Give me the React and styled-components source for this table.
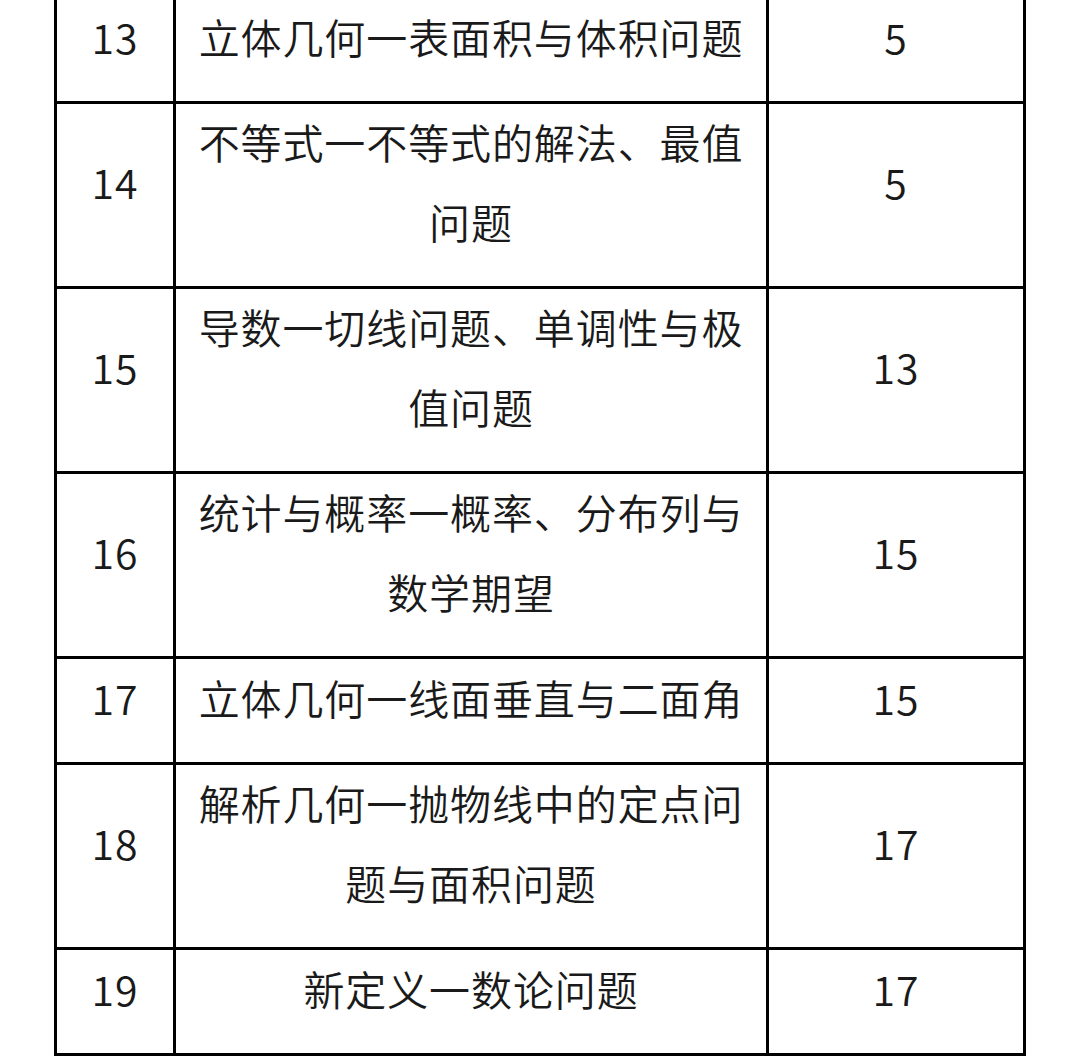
import React from "react";
import styled, { createGlobalStyle } from "styled-components";

const Global = createGlobalStyle`
  html, body { margin: 0; padding: 0; background: #fff; }
  body { overflow: hidden; }
`;

const Page = styled.div`
  padding-left: 54px;
  margin-top: -5px;
`;

const Table = styled.div`
  display: grid;
  grid-template-columns: 116px 590px 254px;
  gap: 3px;
  padding: 3px;
  background: #000;
  width: max-content;
`;

const Cell = styled.div`
  background: #fff;
  height: ${(p) => (p.$tall ? 182 : 103)}px;
  box-sizing: border-box;
  display: flex;
  align-items: center;
  justify-content: center;
  text-align: center;
  padding: 0 20px 28px;
  font-family: "Noto Sans CJK SC", "Noto Sans", sans-serif;
  font-size: 41px;
  font-weight: 350;
  line-height: 80px;
  letter-spacing: 0.9px;
  color: #1a1a1a;
`;

const rows = [
  ["13", "立体几何一表面积与体积问题", "5", false],
  ["14", "不等式一不等式的解法、最值问题", "5", true],
  ["15", "导数一切线问题、单调性与极值问题", "13", true],
  ["16", "统计与概率一概率、分布列与数学期望", "15", true],
  ["17", "立体几何一线面垂直与二面角", "15", false],
  ["18", "解析几何一抛物线中的定点问题与面积问题", "17", true],
  ["19", "新定义一数论问题", "17", false],
];

export default function App() {
  return (
    <>
      <Global />
      <Page>
        <Table>
          {rows.map(([n, t, s, tall]) => (
            <React.Fragment key={n}>
              <Cell $tall={tall}>{n}</Cell>
              <Cell $tall={tall}>{t}</Cell>
              <Cell $tall={tall}>{s}</Cell>
            </React.Fragment>
          ))}
        </Table>
      </Page>
    </>
  );
}
